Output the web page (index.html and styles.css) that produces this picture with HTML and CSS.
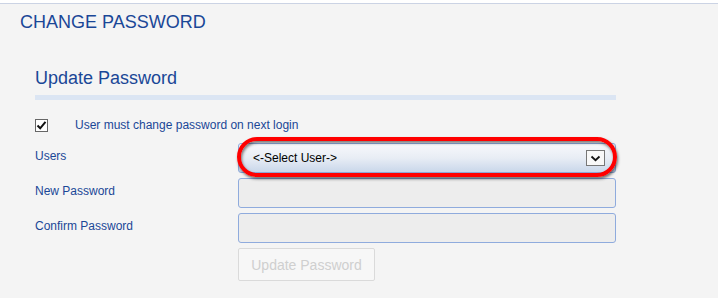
FILE: index.html
```html
<!doctype html>
<html lang="en">
  <head>
    <meta charset="UTF-8" />
    <meta name="viewport" content="width=device-width, initial-scale=1.0" />
    <title>Change Password</title>
    <link rel="stylesheet" href="styles.css">
  </head>
  <body>
    <div class="page">
      <h1 class="page-title">CHANGE PASSWORD</h1>

      <div class="section">
        <h2 class="section-title">Update Password</h2>

        <div class="check-row">
          <span class="checkbox">
            <svg width="11" height="11" viewBox="0 0 11 11">
              <polyline points="1.5,5.5 4.2,8.3 9.5,1.8" fill="none" stroke="#111" stroke-width="2" />
            </svg>
          </span>
          <span class="check-label">User must change password on next login</span>
        </div>

        <div class="form">
          <label class="field-label">Users</label>
          <div class="select-wrap">
            <div class="select">
              <span>&lt;-Select User-&gt;</span>
              <span class="select-arrow">
                <svg width="11" height="7" viewBox="0 0 11 7">
                  <polyline points="1.5,1.5 5.5,5.2 9.5,1.5" fill="none" stroke="#111" stroke-width="1.8" />
                </svg>
              </span>
            </div>
          </div>

          <label class="field-label">New Password</label>
          <input class="input" type="password" disabled />

          <label class="field-label">Confirm Password</label>
          <input class="input" type="password" disabled />

          <span></span>
          <div>
            <button class="button" disabled>Update Password</button>
          </div>
        </div>
      </div>
    </div>
  </body>
</html>
```

FILE: styles.css
```css
* {
  margin: 0;
  padding: 0;
  box-sizing: border-box;
}

html,
body {
  height: 100%;
}

body {
  font-family: "Liberation Sans", Arial, sans-serif;
  background: #ffffff;
  padding-top: 3px;
  padding-right: 1px;
  overflow: hidden;
}

.page {
  background: #f4f4f4;
  border-top: 1px solid #cbd3e4;
  height: 100%;
  color: #1a4797;
}

.page-title {
  font-size: 18px;
  font-weight: normal;
  line-height: 21px;
  padding: 8px 0 0 20px;
}

.section {
  padding: 35px 0 0 35px;
  width: 616px;
}

.section-title {
  font-size: 18px;
  font-weight: normal;
  line-height: 21px;
  padding-bottom: 6px;
  border-bottom: 5px solid #dbe5f3;
}

.check-row {
  display: flex;
  align-items: flex-start;
  margin-top: 18px;
  font-size: 12px;
  line-height: 14px;
}

.checkbox {
  width: 13px;
  height: 13px;
  margin-top: 1px;
  border: 1px solid #666;
  background: #fff;
  display: flex;
  align-items: center;
  justify-content: center;
}

.check-label {
  margin-left: 27px;
}

.form {
  display: grid;
  grid-template-columns: 203px 378px;
  grid-auto-rows: 30px;
  row-gap: 5px;
  margin-top: 11px;
}

.field-label {
  font-size: 12px;
  line-height: 14px;
  padding-top: 6px;
}

.select-wrap {
  position: relative;
}

.select {
  height: 30px;
  border: 1px solid #8fabdd;
  border-radius: 3px;
  background: linear-gradient(#f7f8fb 0%, #e8edf5 50%, #c9d7ea 100%);
  display: flex;
  align-items: center;
  justify-content: space-between;
  padding: 0 10px 0 14px;
  font-size: 12px;
  color: #000;
}

.select-arrow {
  width: 19px;
  height: 16px;
  border: 1px solid #777;
  background: #f8f8f8;
  display: flex;
  align-items: center;
  justify-content: center;
}

/* red annotation ring drawn over the select */
.select-wrap::after {
  content: "";
  position: absolute;
  top: -6px;
  left: -1px;
  right: -1px;
  bottom: -4px;
  border: 4px solid #ff0000;
  border-radius: 20px;
  box-shadow:
    1px 2px 3px rgba(0, 0, 0, 0.55),
    inset 1px 2px 3px rgba(0, 0, 0, 0.5);
  pointer-events: none;
}

.input {
  height: 30px;
  border: 1px solid #8fabdd;
  border-radius: 3px;
  background: #ededed;
}

.button {
  height: 33px;
  width: 137px;
  font-family: inherit;
  font-size: 14px;
  color: #cfcfcf;
  background: #f7f7f7;
  border: 1px solid #dadada;
  border-radius: 2px;
}
```
